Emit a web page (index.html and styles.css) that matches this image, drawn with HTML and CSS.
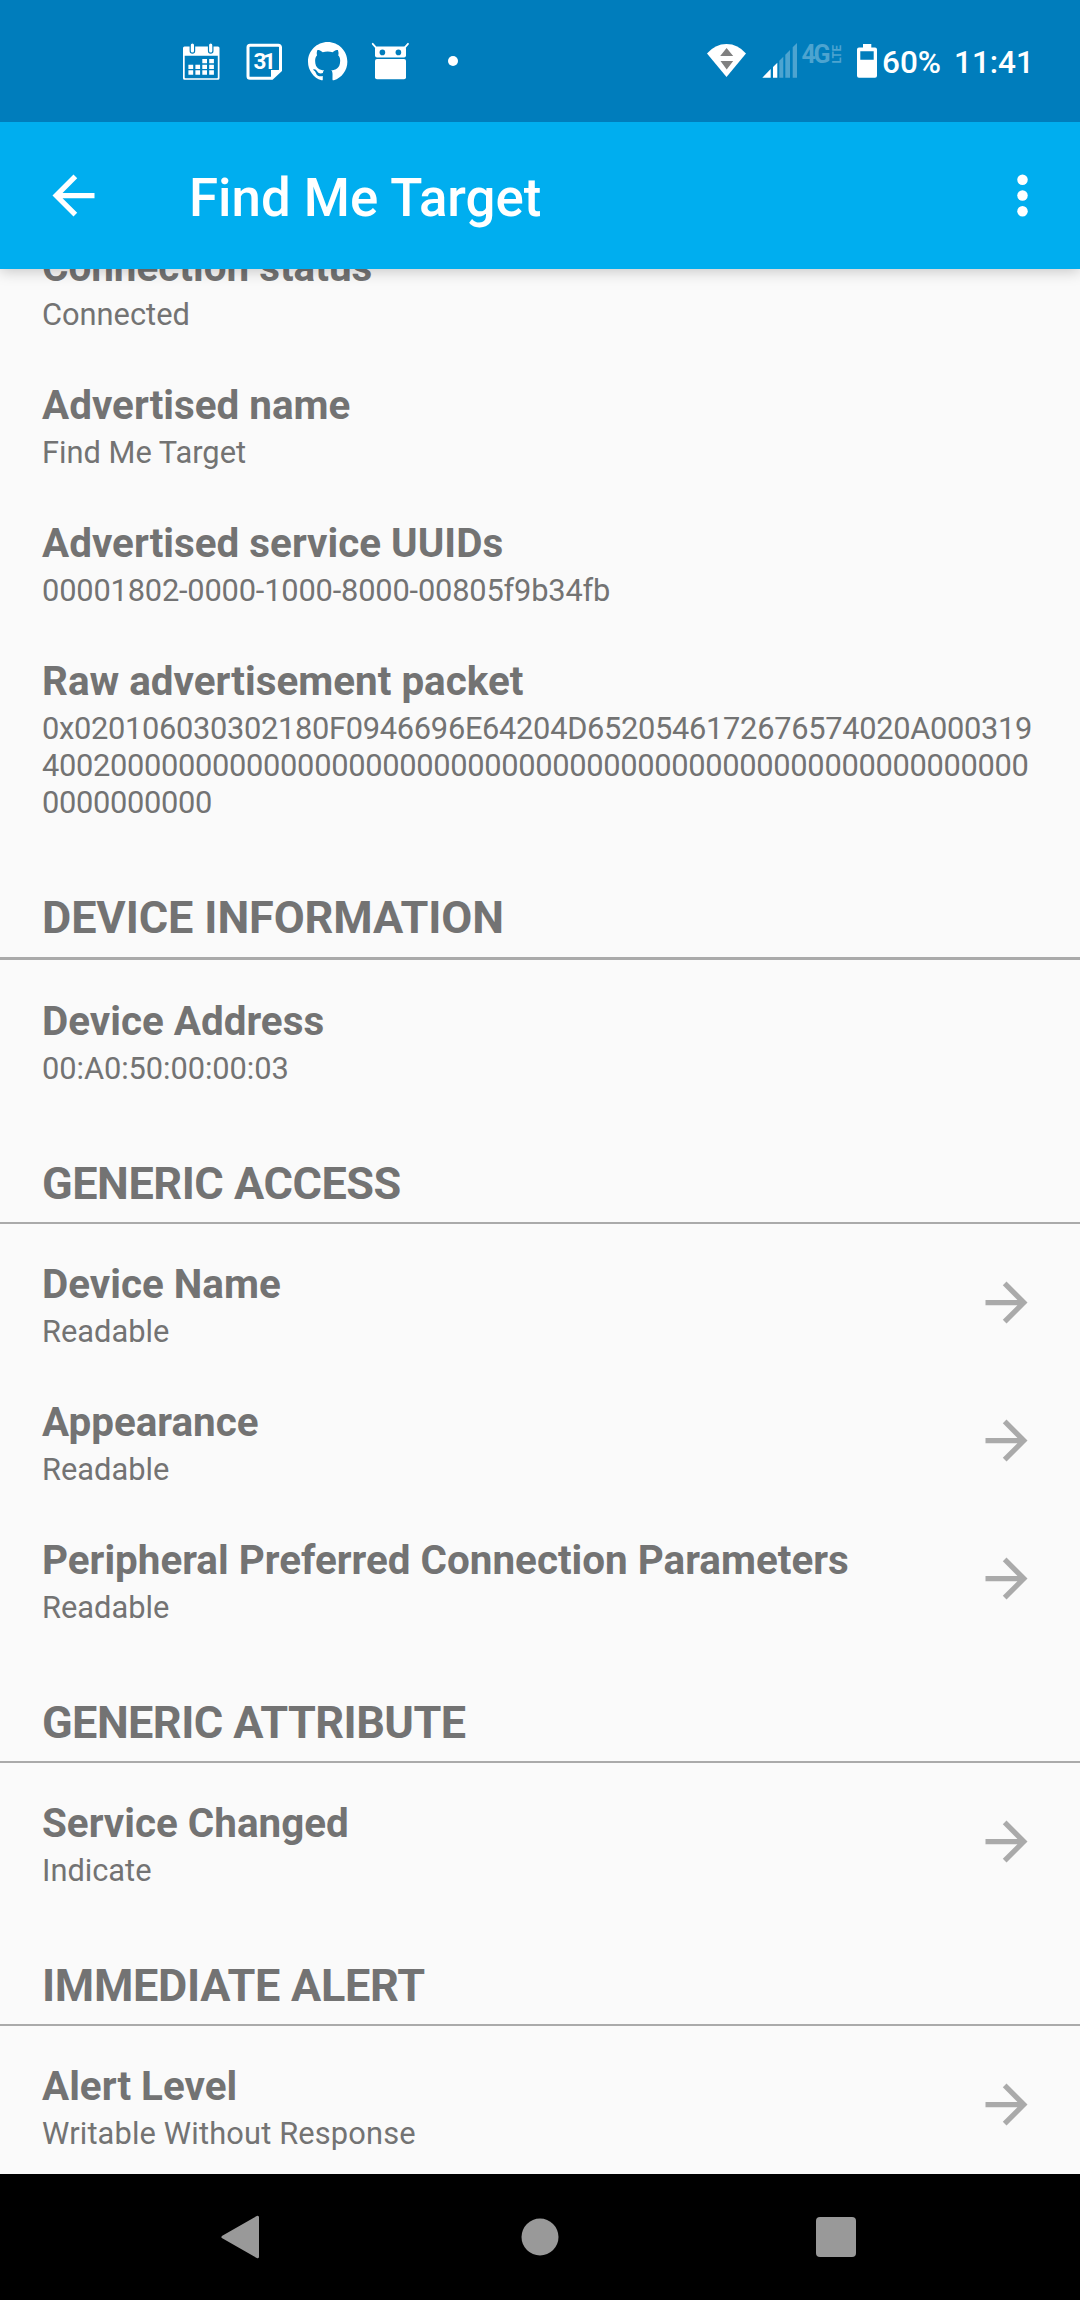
FILE: index.html
```html
<!DOCTYPE html>
<html lang="en">
<head>
<meta charset="utf-8">
<title>Find Me Target</title>
<link rel="stylesheet" href="styles.css">
</head>
<body>
<svg class="defs" width="0" height="0">
  <symbol id="arrow" viewBox="0 0 24 24"><path d="M12 4l-1.41 1.41L16.17 11H4v2h12.17l-5.58 5.59L12 20l8-8z"/></symbol>
</svg>
<div class="screen">
  <div class="status">
    <div class="notifications">
      <svg viewBox="0 0 63 63">
        <path fill="#fff" fill-rule="evenodd" d="M14.5 16.5h33.500a1.500 1.500 0 0 1 1.500 1.500v30.300a1.500 1.500 0 0 1-1.500 1.500h-33.500a1.500 1.500 0 0 1-1.500-1.500V18a1.500 1.500 0 0 1 1.500-1.500zM14.700 25.800V47.500q0 .7.7.7h31.700q.7 0 .7-.7V25.800z"/>
        <g fill="#fff" stroke="#007dbc" stroke-width="1.200"><rect x="20.200" y="12.800" width="4.400" height="10.400" rx="2.200"/><rect x="38.500" y="12.800" width="4.400" height="10.400" rx="2.200"/></g>
        <path fill="#fff" d="M32.300 29h4.700v4.300h-4.700zM39.200 29h4.700v4.300h-4.700zM18.400 34.700h4.800v4.200h-4.800zM25.400 34.700h4.700v4.200h-4.700zM32.300 34.700h4.700v4.200h-4.700zM39.200 34.700h4.700v4.200h-4.700zM18.400 40.200h4.800v4.500h-4.800zM25.400 40.200h4.700v4.500h-4.700zM32.300 40.200h4.700v4.500h-4.700zM39.200 40.200h4.700v4.500h-4.700z"/>
      </svg>
      <svg viewBox="0 0 63 63">
        <path fill="none" stroke="#fff" stroke-width="3" d="M17 15.300h28.500a2 2 0 0 1 2 2v23L39 48.300H17a2 2 0 0 1-2-2V17.300a2 2 0 0 1 2-2z"/>
        <path fill="#fff" d="M38 49.500V40h11z"/>
        <text class="day" x="20.500" y="39" textLength="22.500">31</text>
      </svg>
      <svg viewBox="0 0 63 63">
        <path fill="#fff" transform="translate(12 11.500) scale(1.640)" d="M12 .297c-6.630 0-12 5.373-12 12 0 5.303 3.438 9.800 8.205 11.385.6.113.820-.258.820-.577 0-.285-.010-1.040-.015-2.040-3.338.724-4.042-1.610-4.042-1.610C4.422 18.070 3.633 17.700 3.633 17.700c-1.087-.744.084-.729.084-.729 1.205.084 1.838 1.236 1.838 1.236 1.070 1.835 2.809 1.305 3.495.998.108-.776.417-1.305.760-1.605-2.665-.3-5.466-1.332-5.466-5.930 0-1.310.465-2.380 1.235-3.220-.135-.303-.540-1.523.105-3.176 0 0 1.005-.322 3.300 1.230.960-.267 1.980-.399 3-.405 1.020.006 2.040.138 3 .405 2.280-1.552 3.285-1.230 3.285-1.230.645 1.653.240 2.873.120 3.176.765.840 1.230 1.910 1.230 3.220 0 4.610-2.805 5.625-5.475 5.920.420.360.810 1.096.810 2.220 0 1.606-.015 2.896-.015 3.286 0 .315.210.690.825.570C20.565 22.092 24 17.592 24 12.297c0-6.627-5.373-12-12-12"/>
      </svg>
      <svg viewBox="0 0 63 63">
        <path stroke="#fff" stroke-width="1.800" stroke-linecap="round" d="M13.700 13.800l4 4.500M49 13.800l-4 4.500"/>
        <rect x="16" y="16.600" width="31" height="11" rx="2" fill="#fff"/>
        <rect x="16" y="29" width="31" height="20.300" rx="2" fill="#fff"/>
        <circle cx="23.400" cy="22.400" r="2.800" fill="#007dbc"/><circle cx="39.400" cy="22.400" r="2.800" fill="#007dbc"/>
      </svg>
      <svg viewBox="0 0 63 63"><circle cx="31" cy="31" r="5" fill="#fff"/></svg>
    </div>
    <div class="system">
      <svg class="wifi" viewBox="0 0 39 34">
        <path fill="#fff" d="M0 9.500Q8 0 19.500 0T39 9.500L19.500 33z"/>
        <path fill="#808080" d="M19.600 4l6.600 8H13.200zM13.500 17h12.700l-6.500 8.500z"/>
      </svg>
      <svg class="signal" viewBox="0 0 80 36">
        <path fill="#fff" d="M.3 34.700l8.400-8.700v8.700zM11 24l4.300-4.300v15H11z"/>
        <path fill="#4da4d0" d="M17.300 17.700l4-4v21h-4zM23.300 11.700l4.700-4.700v27.700h-4.700zM30.700 4.300L35 0v34.700h-4.300z"/>
        <text class="net" x="39.500" y="20" textLength="29">4G</text>
        <text class="lte" transform="translate(79 20.500) rotate(-90)" textLength="18.500" lengthAdjust="spacingAndGlyphs">LTE</text>
      </svg>
      <svg class="battery" viewBox="0 0 20 34">
        <path fill="#fff" fill-rule="evenodd" d="M6 0h8.300v3.400H18a2 2 0 0 1 2 2v26.300a2 2 0 0 1-2 2H2a2 2 0 0 1-2-2V5.400a2 2 0 0 1 2-2h4zM3.300 7.300V15.700h13.400V7.300z"/>
      </svg>
      <span class="percent">60%</span>
      <span class="clock">11:41</span>
    </div>
  </div>

  <header class="appbar">
    <svg class="icon" viewBox="0 0 24 24"><path d="M20 11H7.830l5.590-5.590L12 4l-8 8 8 8 1.410-1.410L7.830 13H20v-2z"/></svg>
    <h1 class="heading">Find Me Target</h1>
    <svg class="icon" viewBox="0 0 24 24"><circle cx="12" cy="6" r="2"/><circle cx="12" cy="12" r="2"/><circle cx="12" cy="18" r="2"/></svg>
  </header>

  <main class="content">
    <div class="list">
      <div class="row"><div class="label"><div class="name">Connection status</div><div class="detail">Connected</div></div></div>
      <div class="row"><div class="label"><div class="name">Advertised name</div><div class="detail">Find Me Target</div></div></div>
      <div class="row"><div class="label"><div class="name">Advertised service UUIDs</div><div class="detail uuid">00001802-0000-1000-8000-00805f9b34fb</div></div></div>
      <div class="row"><div class="label"><div class="name">Raw advertisement packet</div><div class="detail hex">0x020106030302180F0946696E64204D6520546172676574020A000319<br>4002000000000000000000000000000000000000000000000000000000<br>0000000000</div></div></div>

      <h2 class="section first">DEVICE INFORMATION</h2>
      <div class="row"><div class="label"><div class="name">Device Address</div><div class="detail address">00:A0:50:00:00:03</div></div></div>

      <h2 class="section">GENERIC ACCESS</h2>
      <div class="row"><div class="label"><div class="name">Device Name</div><div class="detail">Readable</div></div><svg class="go"><use href="#arrow"/></svg></div>
      <div class="row"><div class="label"><div class="name">Appearance</div><div class="detail">Readable</div></div><svg class="go"><use href="#arrow"/></svg></div>
      <div class="row"><div class="label"><div class="name">Peripheral Preferred Connection Parameters</div><div class="detail">Readable</div></div><svg class="go"><use href="#arrow"/></svg></div>

      <h2 class="section attribute">GENERIC ATTRIBUTE</h2>
      <div class="row"><div class="label"><div class="name">Service Changed</div><div class="detail">Indicate</div></div><svg class="go"><use href="#arrow"/></svg></div>

      <h2 class="section alert">IMMEDIATE ALERT</h2>
      <div class="row"><div class="label"><div class="name">Alert Level</div><div class="detail response">Writable Without Response</div></div><svg class="go"><use href="#arrow"/></svg></div>
    </div>
  </main>

  <nav class="navbar">
    <svg viewBox="0 0 60 60"><path stroke="#999" stroke-width="3" stroke-linejoin="round" d="M9 30L43.500 10.300v39.400z"/></svg>
    <svg viewBox="0 0 60 60"><circle cx="30" cy="30" r="18.500"/></svg>
    <svg viewBox="0 0 60 60"><rect x="10" y="10" width="40" height="40" rx="4"/></svg>
  </nav>
</div>
</body>
</html>
```
FILE: styles.css
```css
* { box-sizing: border-box; }

body {
  margin: 0;
  font-family: Roboto, "Liberation Sans", sans-serif;
  color: #737373;
  background: #fafafa;
}

svg { display: block; flex: none; }
.defs { display: none; }

.screen {
  width: 1080px;
  height: 2300px;
  display: flex;
  flex-direction: column;
  overflow: hidden;
}

/* Status bar */
.status {
  flex: none;
  position: relative;
  z-index: 2;
  height: 122px;
  padding: 0 0 0 170px;
  display: flex;
  align-items: flex-start;
  background: #007dbc;
  color: #fff;
}
.notifications { display: flex; padding-top: 30px; }
.notifications svg { width: 63px; height: 63px; }
.day { font-size: 22.5px; font-weight: 700; fill: #fff; }

.system {
  display: flex;
  align-items: flex-start;
  margin-left: 222px;
  padding-top: 43px;
  font-size: 31.5px;
  font-weight: 500;
  line-height: 40px;
}
.wifi { width: 39px; height: 34px; margin: 1px 16px 0 0; }
.signal { width: 80px; height: 36px; margin-right: 15px; overflow: visible; }
.battery { width: 20px; height: 34px; margin: 1px 5px 0 0; }
.net { font-size: 25px; font-weight: 700; fill: #4da4d0; }
.lte { font-size: 12.2px; font-weight: 700; fill: #4da4d0; }
.percent { width: 72px; }

/* App bar */
.appbar {
  flex: none;
  position: relative;
  z-index: 1;
  height: 147px;
  padding: 0 26px 0 42px;
  display: flex;
  align-items: center;
  background: #00aeef;
  color: #fff;
  box-shadow: 0 2px 14px rgba(0, 0, 0, .22);
}
.icon { width: 63px; height: 63px; fill: #fff; }
.heading {
  flex: 1;
  margin: 0;
  padding: 5px 0 0 84px;
  font-size: 52.8px;
  font-weight: 500;
  line-height: 62px;
}

/* Characteristics list, scrolled up under the app bar */
.content {
  flex: 1;
  min-height: 0;
  overflow: hidden;
}
.list { margin-top: -50px; }

.row {
  display: flex;
  align-items: center;
  padding: 24px 42px;
}
.label { flex: 1; }
.name {
  padding-top: 1px;
  margin-bottom: 4px;
  font-size: 40.4px;
  font-weight: 700;
  line-height: 48px;
  white-space: nowrap;
}
.detail {
  font-size: 30.8px;
  line-height: 37px;
  white-space: nowrap;
}
.uuid { letter-spacing: -.18px; }
.hex { letter-spacing: -.3px; }
.address { letter-spacing: -.06px; }
.response { letter-spacing: .15px; }
.go {
  width: 63px;
  height: 63px;
  margin: 0 0 5px;
  fill: #aaa;
}

.section {
  margin: 0 0 12px;
  padding: 46px 42px 11px;
  border-bottom: 2px solid #aaa;
  font-size: 45px;
  font-weight: 700;
  line-height: 54px;
  letter-spacing: -.45px;
}
.first {
  margin-bottom: 13px;
  padding-bottom: 12px;
  border-bottom-width: 3px;
  letter-spacing: -.1px;
}
.attribute { letter-spacing: -.55px; }
.alert { letter-spacing: -.3px; }

/* System navigation */
.navbar {
  flex: none;
  height: 126px;
  padding: 0 214px;
  display: flex;
  justify-content: space-between;
  align-items: center;
  background: #000;
}
.navbar svg { width: 60px; height: 60px; fill: #999; }
```
